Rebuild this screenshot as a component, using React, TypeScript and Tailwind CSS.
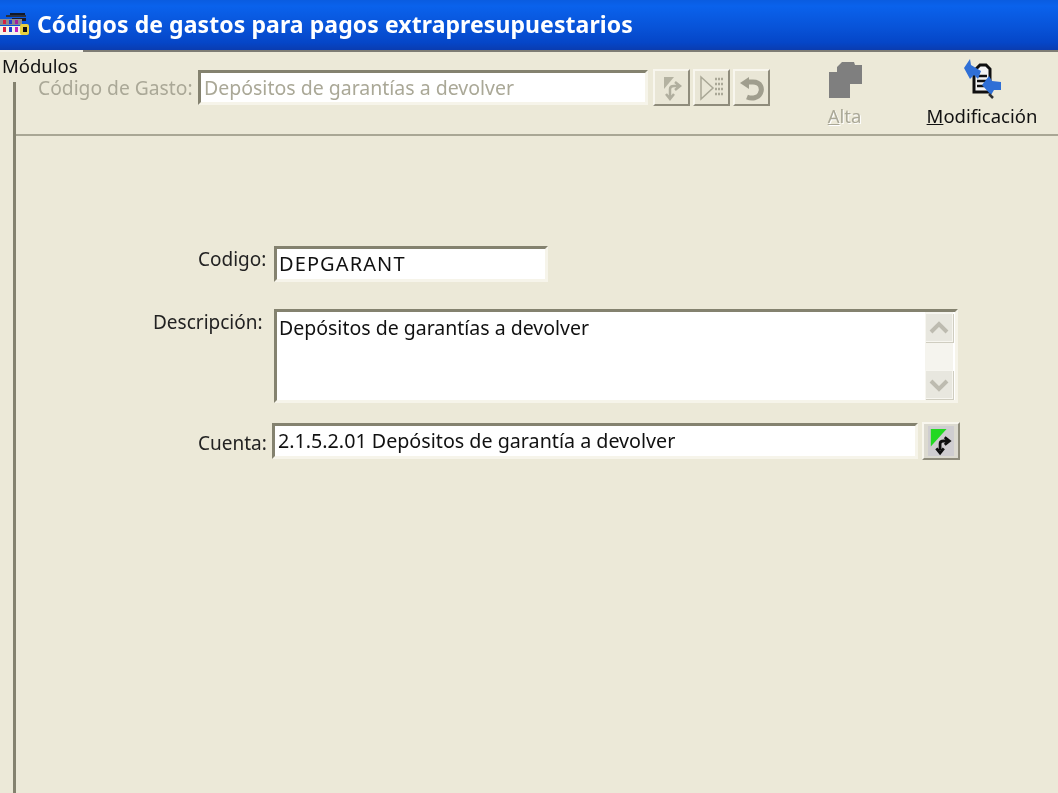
const font = "[font-family:'Noto_Sans','Liberation_Sans',sans-serif]";

function ToolBtn({ children }: { children: React.ReactNode }) {
  return (
    <button className="w-[37px] h-[37px] flex items-center justify-center bg-[#e9e6d6] border-2 border-t-[#f8f6ee] border-l-[#f8f6ee] border-r-[#8f8c7c] border-b-[#8f8c7c]">
      {children}
    </button>
  );
}

function Sunken({ className, children }: { className: string; children?: React.ReactNode }) {
  return (
    <div className={`bg-white border-[3px] border-t-[#84826f] border-l-[#84826f] border-r-[#f6f4ea] border-b-[#f6f4ea] ${className}`}>
      {children}
    </div>
  );
}

function ScrollBtn({ up }: { up: boolean }) {
  return (
    <div className="w-[28px] h-[29px] bg-[#e8e7df] border border-[#f7f6f0] flex items-center justify-center shadow-[1px_1px_0_#cfcdc0]">
      <svg width="20" height="14" viewBox="0 0 20 14" fill="none" stroke="#bdbbb0" strokeWidth="4">
        <path d={up ? "M2 11 L10 3 L18 11" : "M2 3 L10 11 L18 3"} />
      </svg>
    </div>
  );
}

export default function App() {
  return (
    <div className={`relative w-[1058px] h-[793px] overflow-hidden bg-[#ece9d8] flex flex-col blur-[0.5px] ${font}`}>
      <div className="h-[50px] shrink-0 flex items-center bg-[linear-gradient(180deg,#0a5ce0_0%,#0a62ec_12%,#0853d8_55%,#0546c8_85%,#0a3cb0_100%)]">
        <svg width="30" height="30" viewBox="0 0 30 30" className="shrink-0">
          <rect x="10" y="3" width="15" height="2" fill="#10182a" />
          <rect x="6" y="5" width="20" height="2" fill="#2a3040" />
          <rect x="12" y="8" width="14" height="3" fill="#1a1a2a" />
          <rect x="0" y="9" width="22" height="6" fill="#8a8a90" />
          <rect x="3" y="10" width="3" height="4" fill="#d82040" />
          <rect x="9" y="10" width="3" height="4" fill="#2040d0" />
          <rect x="15" y="10" width="3" height="4" fill="#a020a0" />
          <rect x="0" y="16" width="24" height="9" fill="#f4f1ea" />
          <rect x="3" y="17" width="3" height="5" fill="#d82040" />
          <rect x="9" y="17" width="3" height="5" fill="#2040d0" />
          <rect x="15" y="17" width="3" height="5" fill="#c020c0" />
          <rect x="20" y="14" width="9" height="11" rx="2" fill="#e8d040" />
          <rect x="23" y="17" width="4" height="5" fill="#101010" />
        </svg>
        <span className="ml-[7px] text-white font-bold text-[23px] tracking-[0.08px] whitespace-nowrap leading-none mt-[-2px]">
          Códigos de gastos para pagos extrapresupuestarios
        </span>
      </div>
      <div className="h-[2px] shrink-0 bg-[linear-gradient(90deg,#f4f2e8_0,#f4f2e8_83px,#7f7d75_83px)]" />

      <div className="absolute left-[2px] top-[54px] text-[18.5px] leading-[24px] text-[#111]">Módulos</div>

      <div className="flex-1 ml-[13px] mt-[30px] border-l-[3px] border-[#84826f] flex flex-col min-h-0">
        <div className="h-[64px] mt-[-30px] pt-[18px] shrink-0 border-b-2 border-[#a9a795] box-content flex items-start">
          <span className="ml-[22px] mt-[6px] text-[19.25px] leading-[24px] text-[#aaa897] w-[160px] whitespace-nowrap">Código de Gasto:</span>
          <Sunken className="w-[450px] h-[35px] flex items-center pl-[3px] text-[19.5px] text-[#aaa897] whitespace-nowrap">
            Depósitos de garantías a devolver
          </Sunken>
          <div className="flex gap-[3px] ml-[5px] mt-[-1px]">
            <ToolBtn>
              <svg width="26" height="28" viewBox="0 0 26 28" fill="none">
                <path d="M5 3 L15 3 L5 15 Z" fill="#b4b2a1" />
                <path d="M11 23 V15 Q11 12 15 12 H19 M16 8 L21 12 L16 16 M7 20 L11 25 L15 20" stroke="#b0ae9e" strokeWidth="2.5" />
              </svg>
            </ToolBtn>
            <ToolBtn>
              <svg width="28" height="28" viewBox="0 0 28 28" fill="none" stroke="#aaa897">
                <path d="M3 3 L15 14 L3 25 Z" strokeWidth="1.5" />
                <path d="M17 5 H26 M17 10 H26 M17 15 H26 M17 20 H26" strokeWidth="2.5" strokeDasharray="2 1" />
              </svg>
            </ToolBtn>
            <ToolBtn>
              <svg width="28" height="28" viewBox="0 0 28 28" fill="none">
                <path d="M2 9 L11 3 V15 Z" fill="#a09e8e" />
                <path d="M9 8 H15 C23 8 25 15 22 20 C20 24 14 25 9 23" stroke="#a09e8e" strokeWidth="5" />
              </svg>
            </ToolBtn>
          </div>
          <div className="w-[86px] ml-[31px] mt-[-10px] flex flex-col items-center">
            <svg width="36" height="40" viewBox="0 0 36 40" fill="#7f7f7f" className="mr-[-2px]">
              <path d="M10 7 L15 2 H27 L28 5 H35 V24 H23 V38 H2 V12 H10 Z" />
            </svg>
            <span className="text-[18.5px] leading-[24px] mt-[4px] ml-[1px] text-[#aaa897] [text-shadow:1px_1px_0_#fff]"><span className="underline">A</span>lta</span>
          </div>
          <div className="w-[120px] ml-[35px] mt-[-14px] flex flex-col items-center shrink-0">
            <svg width="50" height="46" viewBox="0 0 50 46" className="ml-[-2px]">
              <path d="M18 15 L24 9 H30 L34 13 V36 H18 Z" fill="#f4f4f4" stroke="#101010" strokeWidth="3" />
              <path d="M21 20 H31 M21 25 H31 M21 30 H28" stroke="#101010" strokeWidth="2.5" />
              <path d="M14 3 L15 9 L25 15 L22 23 L18 19 L14 23 L8 12 Z" fill="#2f6fd6" />
              <path d="M26 29 L33 20 L36 25 L45 26 L45 34 L38 34 L35 39 Z" fill="#2f6fd6" />
              <path d="M33 38 L37 42" stroke="#303030" strokeWidth="2.5" />
            </svg>
            <span className="text-[18.5px] leading-[24px] mt-[2px] text-[#111] whitespace-nowrap"><span className="underline">M</span>odificación</span>
          </div>
        </div>

        <div className="mt-[110px] flex flex-col pl-[258px] relative">
          <div className="flex items-start">
            <Sunken className="w-[274px] h-[36px] flex items-center pl-[2px] text-[20px] tracking-[1.1px] text-[#111] whitespace-nowrap">DEPGARANT</Sunken>
          </div>
          <div className="mt-[27px] flex items-start">
            <Sunken className="w-[684px] h-[94px] flex justify-between pl-[2px] pr-[2px] text-[19.5px] text-[#111] whitespace-nowrap">
              <span className="leading-[28px] mt-[2px]">Depósitos de garantías a devolver</span>
              <div className="flex flex-col justify-between w-[28px] py-[1px] bg-[#f5f4ee]">
                <ScrollBtn up />
                <ScrollBtn up={false} />
              </div>
            </Sunken>
          </div>
          <div className="mt-[20px] flex items-start ml-[-2px]">
            <Sunken className="w-[646px] h-[36px] flex items-center pl-[3px] text-[19.7px] text-[#111] whitespace-nowrap">2.1.5.2.01 Depósitos de garantía a devolver</Sunken>
            <button className="w-[38px] h-[38px] ml-[4px] mt-[-1px] flex items-center justify-center bg-[#dcdad0] border-2 border-t-[#f8f6ee] border-l-[#f8f6ee] border-r-[#8f8c7c] border-b-[#8f8c7c]">
              <svg width="26" height="30" viewBox="0 0 28 30" className="bg-[#cfcdd0]" fill="none">
                <path d="M3 2 H20 L3 21 Z" fill="#22d822" />
                <path d="M13 25 V18 Q13 15 17 15 H21 M18 11 L23 15 L18 19 M9 23 L13 28 L17 23" stroke="#101010" strokeWidth="3" />
              </svg>
            </button>
          </div>
          <span className="absolute left-[182px] top-[-1px] text-[19px] leading-[28px] text-[#222] whitespace-nowrap">Codigo:</span>
          <span className="absolute left-[137px] top-[62px] text-[19px] leading-[28px] text-[#222] whitespace-nowrap">Descripción:</span>
          <span className="absolute left-[182px] top-[183px] text-[19px] leading-[28px] text-[#222] whitespace-nowrap">Cuenta:</span>
        </div>
      </div>
    </div>
  );
}
